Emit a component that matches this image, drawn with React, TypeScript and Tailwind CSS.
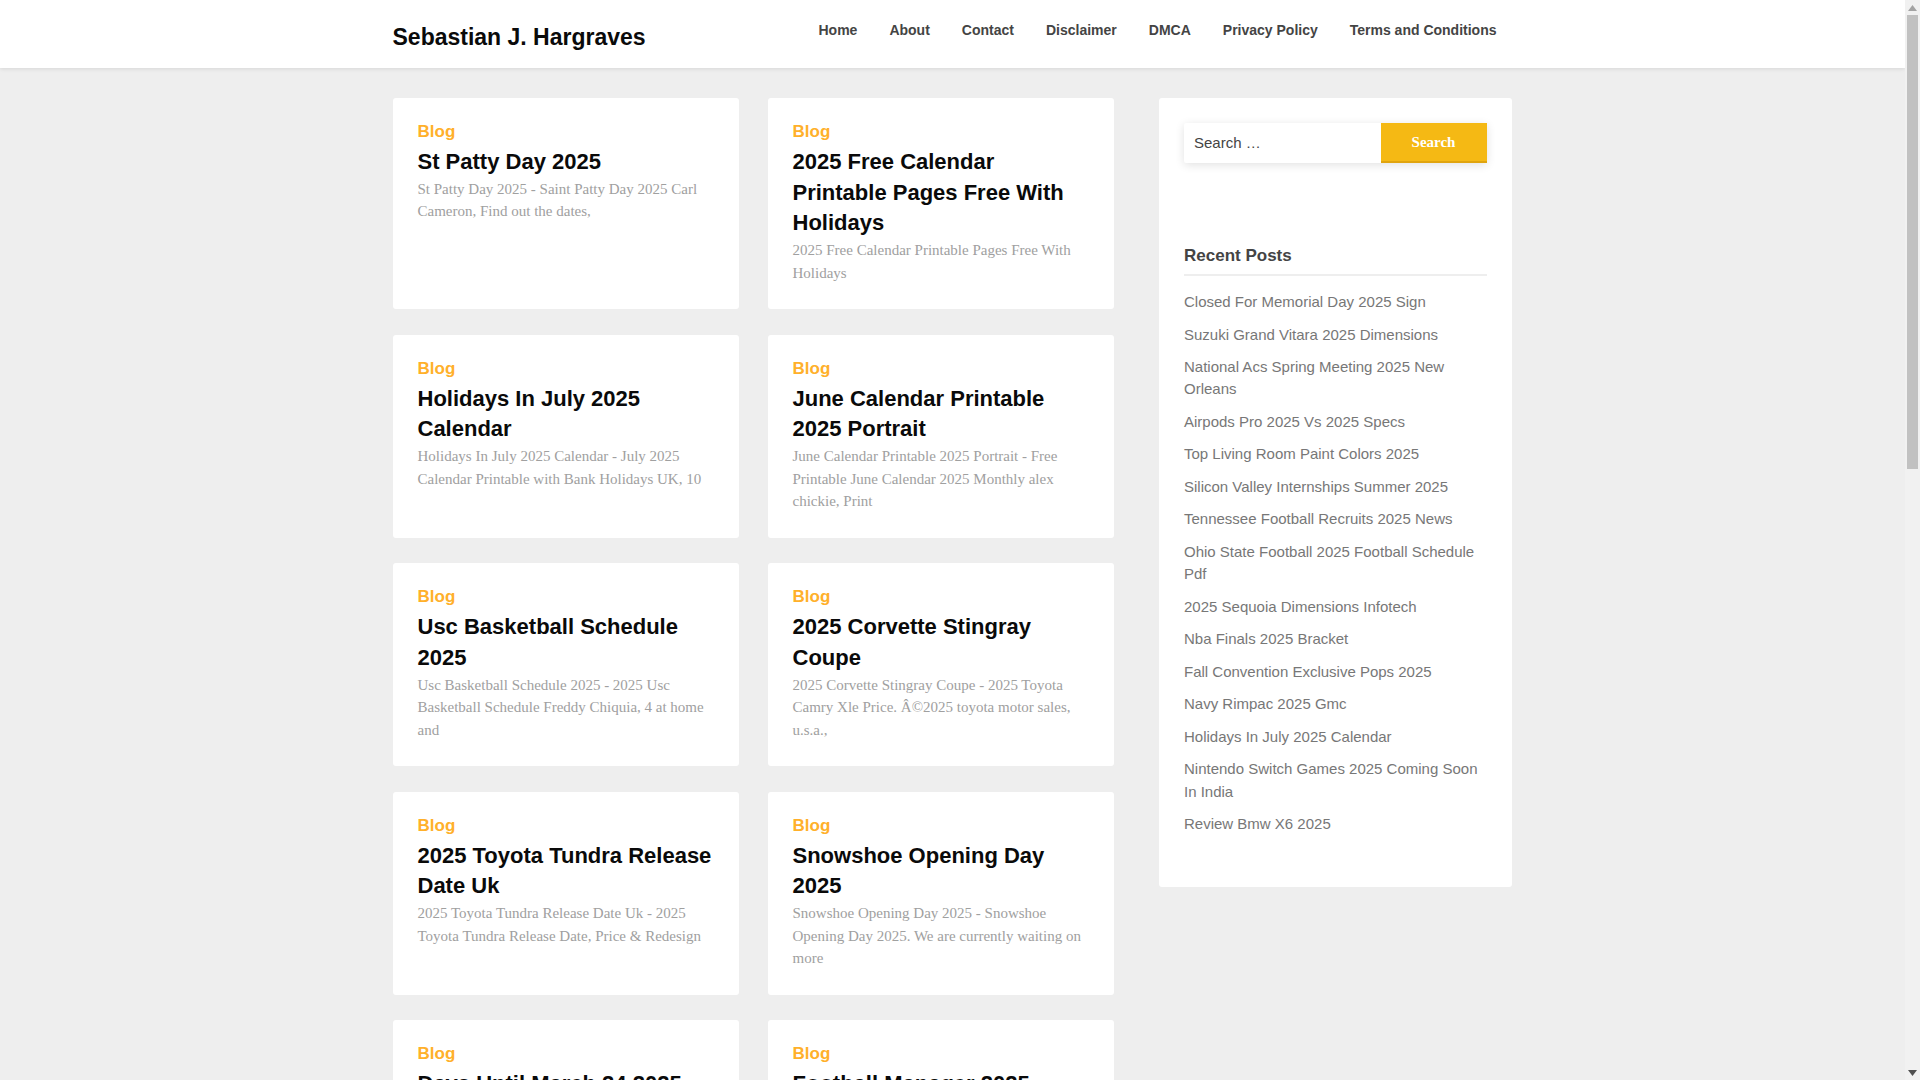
const navLinks = ['Home', 'About', 'Contact', 'Disclaimer', 'DMCA', 'Privacy Policy', 'Terms and Conditions']

const posts = [
  { title: 'St Patty Day 2025', excerpt: 'St Patty Day 2025 - Saint Patty Day 2025 Carl Cameron, Find out the dates,' },
  { title: '2025 Free Calendar Printable Pages Free With Holidays', excerpt: '2025 Free Calendar Printable Pages Free With Holidays' },
  { title: 'Holidays In July 2025 Calendar', excerpt: 'Holidays In July 2025 Calendar - July 2025 Calendar Printable with Bank Holidays UK, 10' },
  { title: 'June Calendar Printable 2025 Portrait', excerpt: 'June Calendar Printable 2025 Portrait - Free Printable June Calendar 2025 Monthly alex chickie, Print' },
  { title: 'Usc Basketball Schedule 2025', excerpt: 'Usc Basketball Schedule 2025 - 2025 Usc Basketball Schedule Freddy Chiquia, 4 at home and' },
  { title: '2025 Corvette Stingray Coupe', excerpt: '2025 Corvette Stingray Coupe - 2025 Toyota Camry Xle Price. Â©2025 toyota motor sales, u.s.a.,' },
  { title: '2025 Toyota Tundra Release Date Uk', excerpt: '2025 Toyota Tundra Release Date Uk - 2025 Toyota Tundra Release Date, Price & Redesign' },
  { title: 'Snowshoe Opening Day 2025', excerpt: 'Snowshoe Opening Day 2025 - Snowshoe Opening Day 2025. We are currently waiting on more' },
  { title: 'Days Until March 24 2025', excerpt: '' },
  { title: 'Football Manager 2025', excerpt: '' },
]

const recentPosts = [
  'Closed For Memorial Day 2025 Sign',
  'Suzuki Grand Vitara 2025 Dimensions',
  'National Acs Spring Meeting 2025 New Orleans',
  'Airpods Pro 2025 Vs 2025 Specs',
  'Top Living Room Paint Colors 2025',
  'Silicon Valley Internships Summer 2025',
  'Tennessee Football Recruits 2025 News',
  'Ohio State Football 2025 Football Schedule Pdf',
  '2025 Sequoia Dimensions Infotech',
  'Nba Finals 2025 Bracket',
  'Fall Convention Exclusive Pops 2025',
  'Navy Rimpac 2025 Gmc',
  'Holidays In July 2025 Calendar',
  'Nintendo Switch Games 2025 Coming Soon In India',
  'Review Bmw X6 2025',
]

function PostCard({ title, excerpt }: { title: string; excerpt: string }) {
  return (
    <article className="rounded-[3px] bg-white px-[25px] pt-[23px] pb-[25.2px]">
      <div className="text-[17px] leading-[22px] font-bold text-[#ffb02a]">Blog</div>
      <h2 className="mt-[4px] text-[22px] leading-[30.6px] font-bold text-[#0a0a0a]">{title}</h2>
      <p className="mt-[0.4px] font-['Liberation_Serif',serif] text-[15px] leading-[22.4px] text-[#a0a0a0]">{excerpt}</p>
    </article>
  )
}

function Scrollbar() {
  return (
    <div className="flex h-full w-[15px] shrink-0 flex-col bg-[#f1f1f1]">
      <div className="flex h-[15px] items-center justify-center">
        <svg width="9" height="6" viewBox="0 0 9 6"><path d="M4.5 0 9 6H0z" fill="#a3a3a3" /></svg>
      </div>
      <div className="mx-auto h-[454px] w-[11px] bg-[#c1c1c1]" />
      <div className="flex-1" />
      <div className="flex h-[15px] items-center justify-center">
        <svg width="9" height="6" viewBox="0 0 9 6"><path d="M0 0h9L4.5 6z" fill="#505050" /></svg>
      </div>
    </div>
  )
}

export default function App() {
  return (
    <div className="flex h-screen overflow-hidden bg-[#eeeeee] font-['Liberation_Sans',Arial,sans-serif]">
      <div className="min-w-0 flex-1">
        <header className="h-[68px] bg-white shadow-[0_1px_4px_rgba(0,0,0,0.1)]">
          <div className="mx-auto flex w-[1120px] justify-between">
            <div className="pt-[21px] text-[23px] leading-[32px] font-bold text-[#0a0a0a]">Sebastian J. Hargraves</div>
            <nav className="flex gap-[32px] pt-[21px] pr-[16px]">
              {navLinks.map((link) => (
                <a key={link} href="#" className="text-[14px] leading-[18px] font-bold text-[#444]">{link}</a>
              ))}
            </nav>
          </div>
        </header>

        <main className="mx-auto mt-[30px] flex w-[1120px] items-start">
          <div className="grid w-[721px] grid-cols-[346px_346px] gap-x-[29px] gap-y-[25.5px]">
            {posts.map((post) => (
              <PostCard key={post.title} title={post.title} excerpt={post.excerpt} />
            ))}
          </div>

          <aside className="ml-[45px] w-[353px] rounded-[3px] bg-white pt-[25px] pr-[25px] pb-[41px] pl-[25.5px]">
            <form className="flex h-[40px] rounded-[2px] shadow-[0_2px_10px_rgba(0,0,0,0.12)]">
              <div className="flex-1 pl-[10px] text-[15px] leading-[40px] text-[#444]">Search …</div>
              <button type="button" className="w-[106px] border-b-[2px] border-[#e0a40e] bg-[#f5b914] font-['Liberation_Serif',serif] text-[15px] font-bold text-white">Search</button>
            </form>
            <h3 className="mt-[82px] border-b-[2px] border-[#eeeeee] pb-[7px] text-[17px] leading-[22px] font-bold text-[#444]">Recent Posts</h3>
            <ul className="mt-[15px]">
              {recentPosts.map((item) => (
                <li key={item} className="mb-[10.1px] text-[15px] leading-[22.4px] text-[#777]">{item}</li>
              ))}
            </ul>
          </aside>
        </main>
      </div>
      <Scrollbar />
    </div>
  )
}
